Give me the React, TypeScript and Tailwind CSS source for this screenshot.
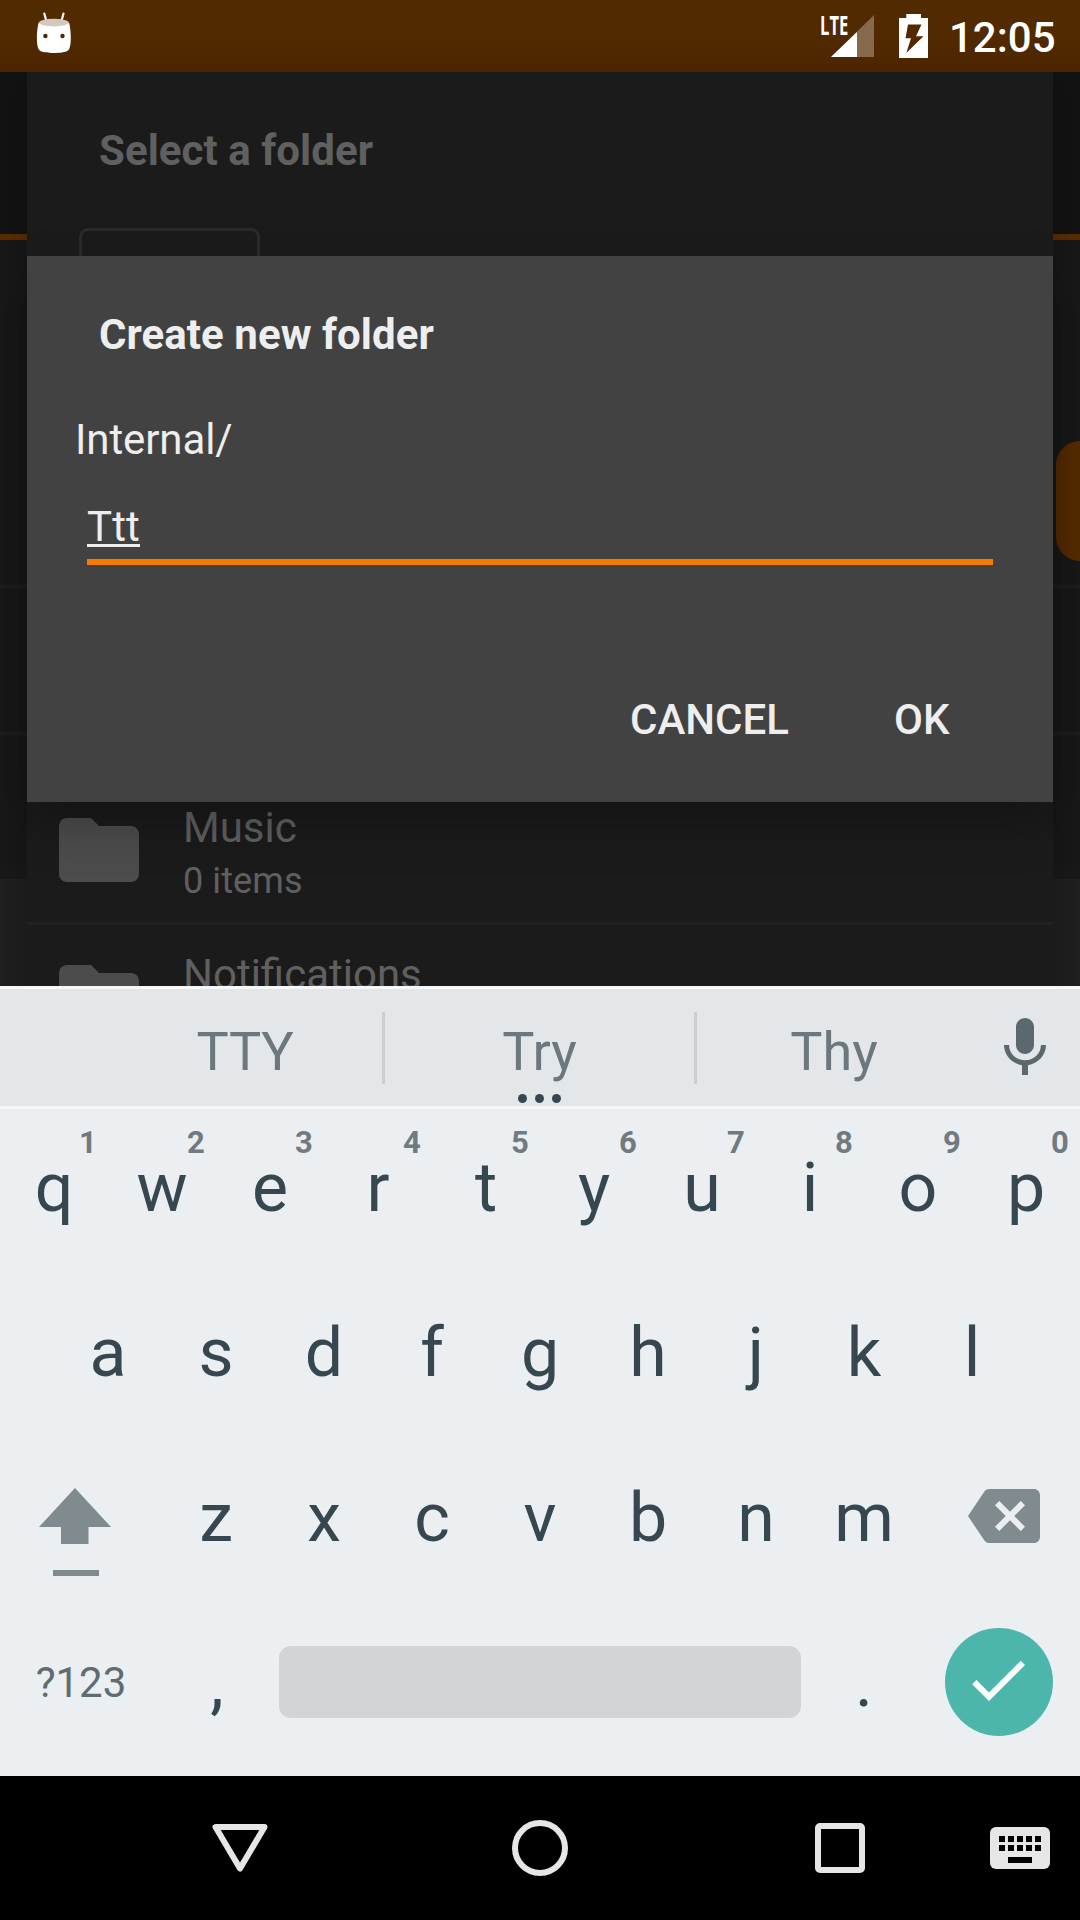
import React from "react";

const topRow = ["q", "w", "e", "r", "t", "y", "u", "i", "o", "p"];
const hints = ["1", "2", "3", "4", "5", "6", "7", "8", "9", "0"];
const homeRow = ["a", "s", "d", "f", "g", "h", "j", "k", "l"];
const bottomRow = ["z", "x", "c", "v", "b", "n", "m"];

function StatusBar() {
  return (
    <header className="flex h-[72px] w-full shrink-0 items-start bg-linear-to-b from-[#522a00] from-50% to-[#4c2500] text-white">
      <svg className="ml-[36px] mt-[11px] h-[44px] w-[36px]" viewBox="36 11 36 44">
        <path d="M44.3 13.5L46.3 21M63.5 13.5L61.5 21" stroke="#fff" strokeWidth="2.2" strokeLinecap="round" />
        <path
          d="M38.5 23C40 21.5 45 26 53.8 26S67.5 21.500 69.200 23C70.200 27 70.800 33 70.800 37C70.800 43 70.200 48 68.600 50C66.500 52.200 60 53 53.800 53S41.300 52.200 39.200 50C37.500 48 36.900 43 36.900 37C36.900 33 37.500 27 38.500 23Z"
          fill="#fff"
        />
        <ellipse cx="53.900" cy="22.600" rx="15" ry="3.800" fill="#d3c8bd" />
        <circle cx="45.400" cy="36" r="2.200" fill="#4f2800" />
        <circle cx="62.500" cy="36" r="2.200" fill="#4f2800" />
      </svg>
      <div className="relative ml-[749px] mt-[14px] h-[44px] w-[54px]">
        <span className="absolute left-[-1px] top-[-3px] origin-left scale-x-[0.64] font-['Open_Sans',sans-serif] text-[26px] font-bold leading-[28px]">
          LTE
        </span>
        <svg className="absolute left-[10px] top-[1px] h-[42px] w-[43px]" viewBox="0 0 43 42">
          <path d="M43 0V42H0Z" fill="#866a4d" />
          <path d="M26 17V42H0Z" fill="#fff" />
        </svg>
      </div>
      <svg className="ml-[24px] mt-[14px] h-[44px] w-[29px]" viewBox="0 0 29 44">
        <path
          fillRule="evenodd"
          d="M7.300 0H22V4H29V44H0V4H7.300ZM9 10.500L6.500 24.300H12L7.300 39L24.500 22.200H17L22.500 10.500Z"
          fill="#fff"
        />
      </svg>
      <span className="ml-[21px] mt-[13px] whitespace-nowrap text-[42px] font-medium leading-[49px]">12:05</span>
    </header>
  );
}

function FolderRow({ name, detail }: { name: string; detail?: string }) {
  return (
    <div className="flex h-[147px] shrink-0 items-start gap-[36px] border-b-[3px] border-[#212121] pl-[24px] pt-[24px]">
      <svg className="size-[96px]" viewBox="0 0 24 24" fill="#4c4c4c">
        <path d="M10 4H4c-1.100 0-1.990.9-1.990 2L2 18c0 1.100.9 2 2 2h16c1.100 0 2-.9 2-2V8c0-1.100-.9-2-2-2h-8l-2-2z" />
      </svg>
      <div className="mt-px flex flex-col gap-[8px] text-[#606060]">
        <span className="text-[42px] leading-[49px]">{name}</span>
        {detail && <span className="text-[36px] leading-[43px] tracking-[0.1px]">{detail}</span>}
      </div>
    </div>
  );
}

function Backdrop() {
  return (
    <div className="flex h-full flex-col">
      <div className="h-[168px] shrink-0 border-b-[6px] border-[#5c2e00] bg-[#131313]" />
      <div className="flex h-[348px] shrink-0 items-start justify-end border-b-[3px] border-[#1f1f1f] bg-[#191919]">
        <div className="mt-[201px] h-[120px] w-[24px] rounded-l-[26px] bg-[#5a2d00]" />
      </div>
      <div className="h-[147px] shrink-0 border-b-[3px] border-[#1f1f1f] bg-[#191919]" />
      <div className="h-[144px] shrink-0 bg-[#191919]" />
      <div className="grow bg-[#202020]" />
    </div>
  );
}

function FolderPicker() {
  return (
    <section className="absolute inset-x-[27px] top-0 flex h-[1000px] flex-col bg-[#1b1b1b] shadow-[0_0_40px_rgba(0,0,0,0.250)]">
      <h2 className="ml-[72px] mt-[54px] text-[42px] font-bold leading-[49px] tracking-[0.05px] text-[#606060]">
        Select a folder
      </h2>
      <div className="ml-[52px] mt-[53px] h-[110px] w-[181px] shrink-0 rounded-[9px] border-[3px] border-[#2b2b2b]" />
      <div className="mt-[440px] flex flex-col">
        <FolderRow name="Music" detail="0 items" />
        <FolderRow name="Notifications" />
      </div>
    </section>
  );
}

function CreateDialog() {
  return (
    <section className="absolute inset-x-[27px] top-[184px] flex h-[546px] flex-col bg-[#424242] text-[#eee] shadow-[0_22px_46px_rgba(0,0,0,0.260)]">
      <h1 className="ml-[72px] mt-[54px] text-[42px] font-bold leading-[49px] tracking-[0.05px]">Create new folder</h1>
      <p className="ml-[48px] mt-[56px] text-[42px] leading-[49px] tracking-[-0.1px]">Internal/</p>
      <div className="ml-[60px] mt-[38px] w-[906px] border-b-[6px] border-[#f57c00] pb-[8px] text-[42px] leading-[49px]">
        <span className="block w-fit tracking-[0.15px] underline decoration-[3px] underline-offset-[3px] [text-decoration-skip-ink:none]">
          Ttt
        </span>
      </div>
      <div className="ml-[603px] mt-[130px] flex text-[42px] font-medium leading-[49px]">
        <button className="w-[264px] text-left">CANCEL</button>
        <button>OK</button>
      </div>
    </section>
  );
}

function Key({ label, hint }: { label: string; hint?: string }) {
  return (
    <div className="relative w-[108px] pt-[39px] text-center text-[68px] leading-[80px]">
      {label}
      {hint && (
        <span className="absolute left-[68px] top-[15px] w-[40px] text-center text-[31px] font-bold leading-[37px] text-[#6f7b80]">
          {hint}
        </span>
      )}
    </div>
  );
}

function Suggestions() {
  return (
    <div className="flex h-[123px] shrink-0 items-start border-y-[3px] border-[#f6f7f8] bg-[#e3e7e9] pl-[108px] text-[54px] leading-[64px] text-[#6c787d]">
      <span className="mt-[31px] w-[274px] text-center tracking-[-0.3px]">TTY</span>
      <div className="mt-[23px] h-[72px] w-[3px] bg-[#cbcfd1]" />
      <div className="relative h-full w-[309px] pt-[31px] text-center">
        Try
        <div className="absolute left-[133px] top-[105px] flex gap-[8px]">
          <i className="size-[9px] rounded-full bg-[#37474f]" />
          <i className="size-[9px] rounded-full bg-[#37474f]" />
          <i className="size-[9px] rounded-full bg-[#37474f]" />
        </div>
      </div>
      <div className="mt-[23px] h-[72px] w-[3px] bg-[#cbcfd1]" />
      <span className="mt-[31px] w-[274px] text-center">Thy</span>
      <svg className="ml-[18px] mt-[23px] size-[72px]" viewBox="0 0 24 24" fill="#5b696f">
        <path d="M12 14c1.660 0 2.990-1.340 2.990-3L15 5c0-1.660-1.340-3-3-3S9 3.340 9 5v6c0 1.660 1.340 3 3 3zm5.300-3c0 3-2.540 5.100-5.300 5.100S6.700 14 6.700 11H5c0 3.410 2.720 6.230 6 6.720V21h2v-3.280c3.280-.48 6-3.300 6-6.720h-1.700z" />
      </svg>
    </div>
  );
}

function Keyboard() {
  return (
    <section className="flex h-[790px] shrink-0 flex-col bg-[#ebeff2] text-[#37474f]">
      <Suggestions />
      <div className="flex h-[165px]">
        {topRow.map((k, i) => (
          <Key key={k} label={k} hint={hints[i]} />
        ))}
      </div>
      <div className="flex h-[165px] justify-center">
        {homeRow.map((k) => (
          <Key key={k} label={k} />
        ))}
      </div>
      <div className="flex h-[165px]">
        <div className="w-[162px] pl-[39px] pt-[49px]">
          <svg className="h-[88px] w-[72px]" viewBox="0 0 72 88" fill="#808b8f">
            <path d="M36 0L72 39H49.500V56H22V39H0Z" />
            <path d="M14 82H60V88H14Z" />
          </svg>
        </div>
        {bottomRow.map((k) => (
          <Key key={k} label={k} />
        ))}
        <svg className="ml-[50px] mt-[41px] size-[72px]" viewBox="0 0 24 24" fill="#808b8f">
          <path d="M22 3H7c-.69 0-1.230.35-1.590.88L0 12l5.410 8.110c.36.53.9.89 1.590.89h15c1.100 0 2-.9 2-2V5c0-1.100-.9-2-2-2zm-3 12.590L17.590 17 14 13.410 10.410 17 9 15.590 12.590 12 9 8.410 10.410 7 14 10.590 17.590 7 19 8.410 15.410 12 19 15.590z" />
        </svg>
      </div>
      <div className="flex h-[165px] items-start">
        <span className="w-[162px] pt-[54px] text-center text-[42px] leading-[49px] text-[#5f6c71]">?123</span>
        <div className="pl-px">
          <Key label="," />
        </div>
        <div className="ml-[8px] mt-[42px] h-[72px] w-[522px] rounded-[12px] bg-[#d1d5d8]" />
        <div className="ml-[9px]">
          <Key label="." />
        </div>
        <div className="ml-[27px] mt-[24px] flex size-[108px] items-start rounded-full bg-[#4db6ac] pl-[17px] pt-[16px]">
          <svg className="size-[72px]" viewBox="0 0 24 24" fill="#fff">
            <path d="M9 16.170L4.830 12l-1.420 1.410L9 19 21 7l-1.410-1.410z" />
          </svg>
        </div>
      </div>
    </section>
  );
}

function NavBar() {
  return (
    <nav className="flex h-[144px] shrink-0 items-center bg-black">
      <svg className="ml-[212px] size-[56px]" viewBox="0 0 56 56" fill="none">
        <path d="M3.500 7H52.500L28 48.500Z" stroke="#e6e6e6" strokeWidth="6" strokeLinejoin="round" />
      </svg>
      <svg className="ml-[244px] size-[56px]" viewBox="0 0 56 56" fill="none">
        <circle cx="28" cy="28" r="25" stroke="#e6e6e6" strokeWidth="6" />
      </svg>
      <div className="ml-[247px] size-[50px] rounded-[5px] border-[6px] border-[#e6e6e6]" />
      <svg className="ml-[125px] h-[42px] w-[60px]" viewBox="0 0 60 42">
        <rect width="60" height="42" rx="6" fill="#e6e6e6" />
        <path
          d="M9 9h6v6h-6zM18 9h6v6h-6zM27 9h6v6h-6zM36 9h6v6h-6zM45 9h6v6h-6zM9 18h6v6h-6zM18 18h6v6h-6zM27 18h6v6h-6zM36 18h6v6h-6zM45 18h6v6h-6zM18 30h24v6H18z"
          fill="#000"
        />
      </svg>
    </nav>
  );
}

export default function App() {
  return (
    <div className="flex h-[1920px] w-[1080px] flex-col overflow-hidden bg-black font-['Roboto',sans-serif]">
      <StatusBar />
      <main className="relative h-[914px] shrink-0 overflow-hidden">
        <Backdrop />
        <FolderPicker />
        <CreateDialog />
      </main>
      <Keyboard />
      <NavBar />
    </div>
  );
}
